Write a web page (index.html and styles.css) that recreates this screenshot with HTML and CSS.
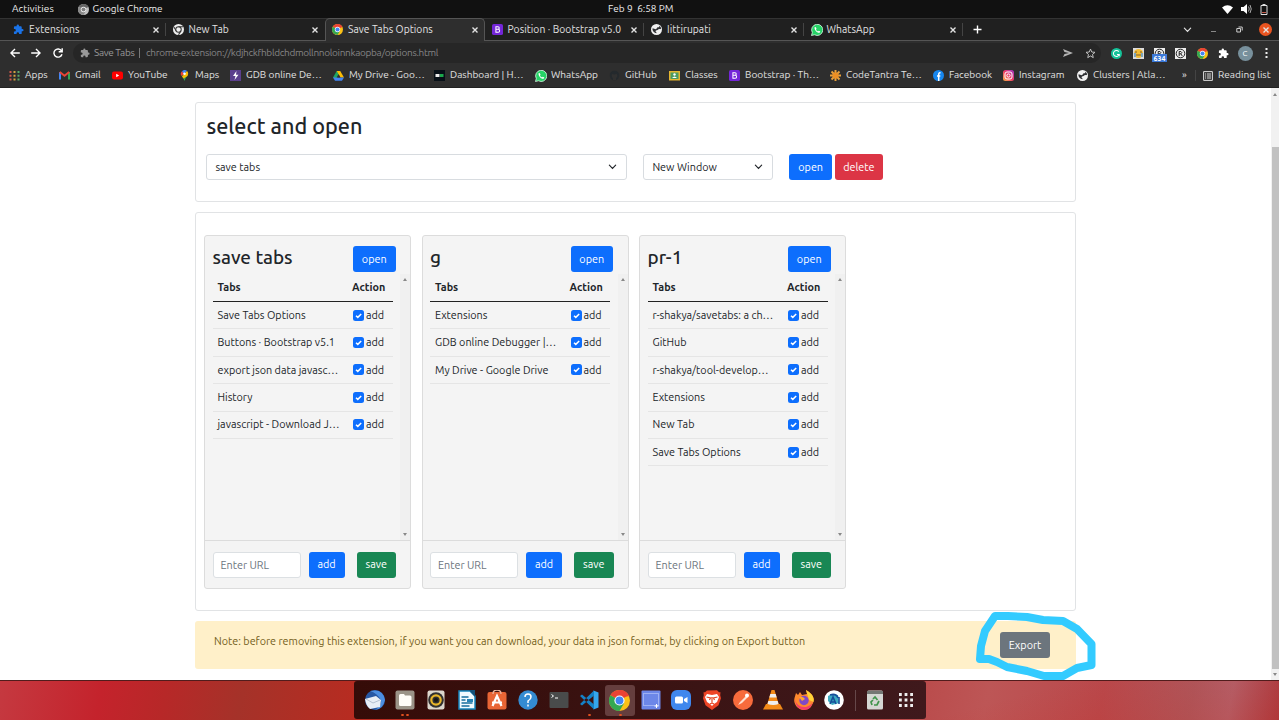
FILE: index.html
```html
<!DOCTYPE html>
<html lang="en">
<head>
<meta charset="utf-8">
<title>Save Tabs Options</title>
<link rel="stylesheet" href="styles.css">
</head>
<body>
<svg class="defs" aria-hidden="true">
  <symbol id="chrome" viewBox="0 0 24 24"><circle cx="12" cy="12" r="12" fill="#fbc116"/><path d="M12 12 1.600 6A12 12 0 0 1 22.400 6z" fill="#ea4335"/><path d="M12 0A12 12 0 0 1 22.400 6H12z" fill="#ea4335"/><path d="M1.600 6A12 12 0 0 0 12 24L17.200 15 12 12z" fill="#34a853"/><path d="M12 6.500h10.600" stroke="#ea4335" stroke-width="1.500"/><circle cx="12" cy="12" r="5.800" fill="#fff"/><circle cx="12" cy="12" r="4.500" fill="#4285f4"/></symbol>
  <symbol id="chrome-mono" viewBox="0 0 24 24"><circle cx="12" cy="12" r="12" fill="#eee"/><circle cx="12" cy="12" r="6" fill="none" stroke="#333" stroke-width="2.200"/><path d="M12 6h10M6.800 15 2 6.500M17.200 15 12 23.500" stroke="#333" stroke-width="2.200"/></symbol>
  <symbol id="puzzle" viewBox="0 0 24 24"><path fill="currentColor" d="M20.500 11H19V7a2 2 0 0 0-2-2h-4V3.500a2.500 2.500 0 0 0-5 0V5H4a2 2 0 0 0-2 2v3.800h1.500a2.700 2.700 0 0 1 0 5.400H2V20a2 2 0 0 0 2 2h3.800v-1.500a2.700 2.700 0 0 1 5.400 0V22H17a2 2 0 0 0 2-2v-4h1.500a2.500 2.500 0 0 0 0-5z"/></symbol>
  <symbol id="globe" viewBox="0 0 24 24"><circle cx="12" cy="12" r="12" fill="#f1f1f1"/><path d="M3 10c3-1 5 2 8 1s1-4 4-4 4-2 2-4c5 2 6 7 4 8s-3-1-5 1-5 1-6 3 3 2 2 5c-5 0-9-5-9-10z" fill="#303134"/></symbol>
  <symbol id="whatsapp" viewBox="0 0 24 24"><path d="m1 23 1.600-6A11.200 11.200 0 1 1 7 21.500z" fill="#25d366" stroke="#e8fff0" stroke-width="1.500"/><path d="M7 8c0-2 2-3 3-1l1 2-1 2c1 2 2 3 4 4l1.500-1.500 3 1.500c0 2-2 3-4 2.500C10 16 7.500 12 7 8z" fill="#fff"/></symbol>
  <symbol id="bootstrap" viewBox="0 0 24 24"><rect width="24" height="24" rx="4" fill="#7426d8"/><path d="M8.500 6v12h5a3.100 3.100 0 0 0 0-6.300H9h4a2.800 2.800 0 0 0 0-5.700z" fill="none" stroke="#fff" stroke-width="2.200"/></symbol>
  <symbol id="close" viewBox="0 0 8 8"><path d="m1.500 1.500 5 5m0-5-5 5" stroke="currentColor" stroke-width="1.400"/></symbol>
  <symbol id="chevron" viewBox="0 0 10 6"><path d="m1.500 1 3.500 3.500L8.500 1" fill="none" stroke="currentColor" stroke-width="1.300" stroke-linecap="round"/></symbol>
  <symbol id="check" viewBox="0 0 11 11"><rect width="11" height="11" rx="2.500" fill="#0d6efd"/><path d="m3 5.700 1.800 1.700L8.200 4" fill="none" stroke="#fff" stroke-width="1.500"/></symbol>
</svg>

<header class="system">
  <span class="activities">Activities</span>
  <svg class="i11 gray"><use href="#chrome"/></svg>
  <span class="app-name">Google Chrome</span>
  <span class="clock">Feb 9&nbsp; 6:58 PM</span>
  <div class="status">
    <svg width="11" height="9" viewBox="0 0 11 9"><path d="M0 2.500Q5.500-2 11 2.500L5.500 9z" fill="#fff"/></svg>
    <svg width="11" height="10" viewBox="0 0 11 10"><path d="M0 3h2.500L6 0v10L2.500 7H0z" fill="#fff"/><path d="M7.500 2.500q1.500 2.500 0 5M9 1q2.500 4 0 8" fill="none" stroke="#aaa"/></svg>
    <svg width="8" height="11" viewBox="0 0 8 11"><path d="M1 1.500h6v9H1zM2.500.5h3" fill="none" stroke="#ddd"/><path d="M2 8.500h4" stroke="#c65a4a"/></svg>
  </div>
</header>

<nav class="tabs">
  <div class="tab"><svg class="i11 blue"><use href="#puzzle"/></svg><span>Extensions</span><svg class="x"><use href="#close"/></svg></div>
  <div class="tab before"><svg class="i11"><use href="#chrome-mono"/></svg><span>New Tab</span><svg class="x"><use href="#close"/></svg></div>
  <div class="tab active"><svg class="i11"><use href="#chrome"/></svg><span>Save Tabs Options</span><svg class="x"><use href="#close"/></svg></div>
  <div class="tab"><svg class="i11"><use href="#bootstrap"/></svg><span>Position · Bootstrap v5.0</span><svg class="x"><use href="#close"/></svg></div>
  <div class="tab"><svg class="i11"><use href="#globe"/></svg><span>Iittirupati</span><svg class="x"><use href="#close"/></svg></div>
  <div class="tab"><svg class="i12"><use href="#whatsapp"/></svg><span>WhatsApp</span><svg class="x"><use href="#close"/></svg></div>
  <svg class="plus" width="9" height="9" viewBox="0 0 9 9"><path d="M4.500.5v8M.5 4.500h8" stroke="#fff" stroke-width="1.400"/></svg>
  <div class="window">
    <svg class="chev"><use href="#chevron"/></svg>
    <svg width="7" height="7" viewBox="0 0 7 7"><path d="M1 5.500h5" stroke="#888"/></svg>
    <svg width="7" height="7" viewBox="0 0 7 7"><path d="M.8 2.500h3.700v3.500H.8zM2.500 1h3.700v3.500" fill="none" stroke="#ccc"/></svg>
    <span class="win-close"><svg class="x"><use href="#close"/></svg></span>
  </div>
</nav>

<div class="toolbar">
  <div class="nav-buttons">
    <svg width="10" height="10" viewBox="0 0 10 10"><path d="M9.800 5H1M5 .9.900 5 5 9.100" fill="none" stroke="#fff" stroke-width="1.400"/></svg>
    <svg width="10" height="10" viewBox="0 0 10 10"><path d="M.2 5H9M5 .9 9.100 5 5 9.100" fill="none" stroke="#fff" stroke-width="1.400"/></svg>
    <svg width="10" height="10" viewBox="0 0 10 10"><path d="M8.500 2.800A4.100 4.100 0 1 0 9 6.200M9.200.3v3.500H5.700" fill="none" stroke="#fff" stroke-width="1.400"/></svg>
  </div>
  <div class="omnibox">
    <svg class="i10"><use href="#puzzle"/></svg>
    <span class="origin">Save Tabs</span><i></i>
    <span class="url">chrome-extension://kdjhckfhbldchdmollnnoloinnkaopba/options.html</span>
    <svg class="send" width="10" height="8" viewBox="0 0 10 8"><path d="m0 0 10 4L0 8l1.500-3L6 4 1.500 3z" fill="#b5b5b5"/></svg>
    <svg width="11" height="11" viewBox="0 0 12 12"><path d="m6 1.200 1.400 3.200 3.500.3-2.700 2.300.8 3.500L6 8.700l-3 1.800.8-3.500-2.700-2.300 3.500-.3z" fill="none" stroke="#ccc"/></svg>
  </div>
  <div class="extensions">
    <svg width="11" height="11" viewBox="0 0 24 24"><circle cx="12" cy="12" r="12" fill="#15c39a"/><path d="M17 8a6.500 6.500 0 1 0 1 6h-5m5 0v4" fill="none" stroke="#fff" stroke-width="2.200"/></svg>
    <svg width="11" height="11" viewBox="0 0 11 11"><path d="M0 0h11v11H0z" fill="#ddd"/><circle cx="5.500" cy="5.500" r="4.600" fill="#f3bd35"/><path d="M2 4h2m3 0h2M3 7h5" stroke="#82612b"/><path d="M1 5h2v4H1zm7 0h2v4H8z" fill="#7ba5bd"/></svg>
    <span class="counter"><svg width="11" height="11" viewBox="0 0 11 11"><path d="M0 0h11v11H0z" fill="#eee"/><circle cx="5.500" cy="5.500" r="4.300" fill="none" stroke="#222"/><path d="M4.200 8V3.500h1.700q2 1.200 0 2.300H4.300m1.500 0L7.300 8" fill="none" stroke="#222"/></svg><b>634</b></span>
    <svg width="11" height="11" viewBox="0 0 11 11"><path d="M0 0h11v11H0z" fill="#eee"/><circle cx="5.500" cy="5.500" r="4.300" fill="none" stroke="#222"/><path d="M4.200 8V3.500h1.700q2 1.200 0 2.300H4.300m1.500 0L7.300 8" fill="none" stroke="#222"/></svg>
    <svg class="i11"><use href="#chrome"/></svg>
    <svg class="i11 white"><use href="#puzzle"/></svg>
    <span class="avatar">C</span>
    <svg width="3" height="10" viewBox="0 0 3 10"><path d="M.5 1h2M.5 5h2M.5 9h2" stroke="#eee" stroke-width="1.800"/></svg>
  </div>
</div>

<nav class="bookmarks">
  <a><svg width="11" height="10" viewBox="0 0 11 10"><g stroke-width="2" stroke-dasharray="2 1.800"><path d="M1.500 0v10" stroke="#d65a4d"/><path d="M5.500 0v10" stroke="#d2a240"/><path d="M9.500 0v10" stroke="#59a867"/></g></svg>Apps</a>
  <a><svg width="11" height="9" viewBox="0 0 11 9"><path d="M1 8.500V1" stroke="#4285f4" stroke-width="2"/><path d="M10 8.500V1" stroke="#34a853" stroke-width="2"/><path d="m.8 1 4.700 3.700L10.200 1" fill="none" stroke="#ea4335" stroke-width="2"/></svg>Gmail</a>
  <a><svg width="11" height="9" viewBox="0 0 11 9"><rect y=".5" width="11" height="8" rx="2" fill="#f00"/><path d="M4.200 2.700v3.600l3-1.800z" fill="#fff"/></svg>YouTube</a>
  <a><svg width="11" height="11" viewBox="0 0 11 11"><path d="M5.500 11Q4.500 7.500 2.500 5.500h6Q6.500 7.500 5.500 11" fill="#34a853"/><path d="M2.500 6A3.700 3.700 0 0 1 3 1.200l2.500 2.500z" fill="#ea4335"/><path d="M3 1.200A3.700 3.700 0 0 1 8 1L5 4z" fill="#4285f4"/><path d="M8 1q2 2 .5 5L4.500 8.500 3 6.500z" fill="#fbbc04"/><circle cx="5.500" cy="3.700" r="1.300" fill="#fff"/></svg>Maps</a>
  <a><svg width="11" height="11" viewBox="0 0 11 11"><path d="M0 0h11v11H0z" fill="#5b3f8d"/><path d="M6.500 1 3 6h2.500L4.500 10 8.500 4.800H6z" fill="#fff"/></svg>GDB online De…</a>
  <a><svg width="11" height="10" viewBox="0 0 11 10"><path d="M3.700 0h3.500L3.500 9.500 0 6.500z" fill="#1fa463"/><path d="M3.700 0h3.500L11 6.500H7.500z" fill="#fbbc04"/><path d="M0 6.500h11l-2 3.300H2z" fill="#4285f4"/><path d="M5.500 3.300 3.600 6.500h3.800z" fill="#2e2e2e"/></svg>My Drive - Goo…</a>
  <a><svg width="11" height="11" viewBox="0 0 11 11"><path d="M0 0h11v11H0z" fill="#071018"/><path d="M1.500 4h4v3h-4z" fill="#eee"/><path d="M6 4h3.500v3H6z" fill="#1ba94c"/></svg>Dashboard | H…</a>
  <a><svg class="i12"><use href="#whatsapp"/></svg>WhatsApp</a>
  <a><svg width="11" height="11" viewBox="0 0 11 11"><circle cx="5.500" cy="5.500" r="4.800" fill="#24292d"/><path d="M4 10V8Q2 7 3 4l2 .5L8 4q1 3-1 4v2" fill="#303030"/></svg>GitHub</a>
  <a><svg width="11" height="11" viewBox="0 0 11 11"><path d="M0 1h11v9.500H0z" fill="#e5b52f"/><path d="M1.500 2.500h8v6.500h-8z" fill="#4b9b61"/><circle cx="5.500" cy="4.500" r="1.200" fill="#fff"/><path d="M3 8q2.500-3 5 0z" fill="#fff"/></svg>Classes</a>
  <a><svg class="i11"><use href="#bootstrap"/></svg>Bootstrap · Th…</a>
  <a><svg width="11" height="11" viewBox="0 0 11 11"><path d="M5.500 0v11M0 5.500h11M1.500 1.500l8 8m0-8-8 8" stroke="#e9a03b" stroke-width="2"/><circle cx="5.500" cy="5.500" r="3" fill="#ed8f24"/></svg>CodeTantra Te…</a>
  <a><svg width="11" height="11" viewBox="0 0 11 11"><circle cx="5.500" cy="5.500" r="5.500" fill="#1686ee"/><path d="M7.500 3Q5.500 2.300 5.700 5v6M4 6h3.300" fill="none" stroke="#fff" stroke-width="1.500"/></svg>Facebook</a>
  <a><svg width="11" height="11" viewBox="0 0 11 11"><defs><linearGradient id="ig" x2="1" y1="1" y2="0"><stop stop-color="#fdb54a"/><stop offset=".5" stop-color="#ed3c68"/><stop offset="1" stop-color="#9b36c7"/></linearGradient></defs><rect width="11" height="11" rx="2.500" fill="url(#ig)"/><g fill="none" stroke="#fff"><rect x="2" y="2" width="7" height="7" rx="2"/><circle cx="5.500" cy="5.500" r="1.600"/></g></svg>Instagram</a>
  <a><svg class="i11"><use href="#globe"/></svg>Clusters | Atla…</a>
  <a class="more">»</a>
  <a class="reading"><svg width="10" height="10" viewBox="0 0 10 10"><path d="M.6.6h8.800v8.800H.6zM2 3h1.200m.8 0h4M2 5h1.200m.8 0h4M2 7h1.200m.8 0h4" fill="none" stroke="#ddd"/></svg>Reading list</a>
</nav>

<main class="page">
  <div class="container">
    <section class="panel chooser">
      <h1>select and open</h1>
      <div class="controls">
        <div class="select wide">save tabs<svg class="chev"><use href="#chevron"/></svg></div>
        <div class="select">New Window<svg class="chev"><use href="#chevron"/></svg></div>
        <div class="pair"><button class="btn primary open">open</button><button class="btn danger">delete</button></div>
      </div>
    </section>

    <section class="panel groups">
      <article class="card">
        <header><h2>save tabs</h2><button class="btn primary open">open</button></header>
        <div class="scroll"><div class="table">
          <div class="row head"><span>Tabs</span><span>Action</span></div>
          <div class="row"><span>Save Tabs Options</span><label><svg class="i11"><use href="#check"/></svg>add</label></div>
          <div class="row"><span>Buttons · Bootstrap v5.1</span><label><svg class="i11"><use href="#check"/></svg>add</label></div>
          <div class="row"><span>export json data javasc…</span><label><svg class="i11"><use href="#check"/></svg>add</label></div>
          <div class="row"><span>History</span><label><svg class="i11"><use href="#check"/></svg>add</label></div>
          <div class="row"><span>javascript - Download J…</span><label><svg class="i11"><use href="#check"/></svg>add</label></div>
        </div><div class="bar"><i class="up"></i><i class="down"></i></div></div>
        <footer><div class="input">Enter URL</div><button class="btn primary add">add</button><button class="btn success">save</button></footer>
      </article>
      <article class="card">
        <header><h2>g</h2><button class="btn primary open">open</button></header>
        <div class="scroll"><div class="table">
          <div class="row head"><span>Tabs</span><span>Action</span></div>
          <div class="row"><span>Extensions</span><label><svg class="i11"><use href="#check"/></svg>add</label></div>
          <div class="row"><span>GDB online Debugger |…</span><label><svg class="i11"><use href="#check"/></svg>add</label></div>
          <div class="row"><span>My Drive - Google Drive</span><label><svg class="i11"><use href="#check"/></svg>add</label></div>
        </div><div class="bar"><i class="up"></i><i class="down"></i></div></div>
        <footer><div class="input">Enter URL</div><button class="btn primary add">add</button><button class="btn success">save</button></footer>
      </article>
      <article class="card">
        <header><h2>pr-1</h2><button class="btn primary open">open</button></header>
        <div class="scroll"><div class="table">
          <div class="row head"><span>Tabs</span><span>Action</span></div>
          <div class="row"><span>r-shakya/savetabs: a ch…</span><label><svg class="i11"><use href="#check"/></svg>add</label></div>
          <div class="row"><span>GitHub</span><label><svg class="i11"><use href="#check"/></svg>add</label></div>
          <div class="row"><span>r-shakya/tool-develop…</span><label><svg class="i11"><use href="#check"/></svg>add</label></div>
          <div class="row"><span>Extensions</span><label><svg class="i11"><use href="#check"/></svg>add</label></div>
          <div class="row"><span>New Tab</span><label><svg class="i11"><use href="#check"/></svg>add</label></div>
          <div class="row"><span>Save Tabs Options</span><label><svg class="i11"><use href="#check"/></svg>add</label></div>
        </div><div class="bar"><i class="up"></i><i class="down"></i></div></div>
        <footer><div class="input">Enter URL</div><button class="btn primary add">add</button><button class="btn success">save</button></footer>
      </article>
    </section>

    <section class="note">
      <p>Note: before removing this extension, if you want you can download, your data in json format, by clicking on Export button</p>
      <button class="btn secondary">Export</button>
      <svg class="marker" width="126" height="74" viewBox="0 0 126 74"><path d="M23 8 13 23 9 38 8 51H17L25 54 35 59 55 63 72 68H91L105 60 119.500 57V36L105 21 91 13 71 12 55 9 36 8z" fill="none" stroke="#33cbff" stroke-width="8" stroke-linejoin="round"/></svg>
    </section>
  </div>
  <div class="page-bar"><i class="up"></i><div class="thumb"></div><i class="down"></i></div>
</main>

<footer class="desktop">
  <div class="dock">
    <span><svg viewBox="0 0 20 20"><circle cx="10" cy="10" r="10" fill="#2858a3"/><path d="M5 1q13-3 15 9-2 9-10 10 7-4 6-10-4-7-11-9z" fill="#4c8ee0"/><path d="m0 9 11-3 5 4-1 7-10 2Q1 16 0 9z" fill="#e9eef5"/><path d="m1 9 7 4 7-3" fill="none" stroke="#b6c1d0"/></svg></span>
    <span class="run two"><svg viewBox="0 0 20 20"><rect x=".5" y=".5" width="19" height="19" rx="2" fill="#9b9488"/><path d="M4 5.500q0-1.500 1.500-1.500H9l1 1.500h5q1.500 0 1.500 1.500v7.500q0 1.500-1.500 1.500H5.500Q4 16 4 14.500z" fill="#fffdf8"/></svg></span>
    <span><svg viewBox="0 0 20 20"><rect x="1.500" y=".5" width="17" height="19" rx="2" fill="#ddd8ce"/><circle cx="10" cy="10" r="7.800" fill="#303030"/><circle cx="10" cy="10" r="4.700" fill="none" stroke="#e8b62b" stroke-width="2.200"/><circle cx="10" cy="10" r="2" fill="#151515"/></svg></span>
    <span><svg viewBox="0 0 20 20"><path d="M2 1h11l5 5v13H2z" fill="#f2faff" stroke="#1685bd" stroke-width="1.500"/><path d="M12 0h6v7z" fill="#15517a"/><path d="M4.500 7h7m-7 3h4m-4 3h11m-11 3h8" stroke="#176e9d" stroke-width="1.500"/><path d="M10 9h6v3h-6z" fill="#2682b5"/></svg></span>
    <span><svg viewBox="0 0 20 20"><rect x=".5" y="2" width="19" height="17.500" rx="2" fill="#e86535"/><path d="M6 4q0-4 4-4t4 4" fill="none" stroke="#e9b49d" stroke-width="1.400"/><path d="m5.500 16 4.500-10 4.500 10M5 12.500h10" fill="none" stroke="#fff" stroke-width="2.200"/></svg></span>
    <span><svg viewBox="0 0 20 20"><circle cx="10" cy="10" r="9.700" fill="#348bd2"/><path d="M7 7q0-3 3-3t3 3q0 2-3 4v2m0 1.500V16.500" fill="none" stroke="#fff" stroke-width="1.500"/></svg></span>
    <span><svg viewBox="0 0 20 20"><rect x=".5" y="2" width="19" height="16" rx="1" fill="#494b4b"/><path d="m2.500 4.500 2 1.500-2 1.500M6 8h3" fill="none" stroke="#fff"/></svg></span>
    <span class="run"><svg viewBox="0 0 20 20"><path d="m14.500.5 5 2v15l-5 2z" fill="#35a6ed"/><path d="m1 6 2-1.500 12 10v5zm0 8 2 1.500 12-10v-5z" fill="#1482c8"/></svg></span>
    <span class="run current"><svg class="big"><use href="#chrome"/></svg></span>
    <span><svg viewBox="0 0 20 20"><rect x=".5" y=".5" width="19" height="19" rx="1" fill="#6c87e8"/><path d="M2.500 3.500h15v12h-15z" fill="none" stroke="#d1dbff" stroke-dasharray="1 1"/><path d="M13.500 16h4m-2-2v4" stroke="#fff"/></svg></span>
    <span><svg viewBox="0 0 20 20"><rect width="20" height="20" rx="6" fill="#4087ed"/><rect x="4" y="6.500" width="8" height="7" rx="1.500" fill="#fff"/><path d="m13 9 3.500-2v6L13 11z" fill="#fff"/></svg></span>
    <span><svg viewBox="0 0 20 20"><path d="m5 .5 10-.2 2 2h1.500l-.3 3 .8 3-2.500 7L10 20l-6.500-4.700L1 8.300l.8-3-.3-3H3z" fill="#ee4526"/><path d="m5 4 5 1 5-1 2 3-2 5-3 2-2 2-2-2-3-2-2-5z" fill="#fff"/><path d="m4.500 7 4 1-1 2m8-3-4 1 1 2M10 7v6m-2 1 2-1 2 1" fill="none" stroke="#e44825" stroke-width="1.200"/></svg></span>
    <span><svg viewBox="0 0 20 20"><circle cx="10" cy="10" r="10" fill="#f76b3c"/><path d="m5 15 2-3 6-6 2 1-6 6z" fill="#ffe0d0"/><circle cx="14" cy="5.500" r="2" fill="#fff"/></svg></span>
    <span><svg viewBox="0 0 20 20"><path d="M3 14h14l3 5.500H0z" fill="#f28a18"/><path d="M8.500 0h3L16 15q-6 3-12 0z" fill="#f28a18"/><path d="M7.300 4h5.400l1 3.500H6.300zM5.300 11h9.400l.8 3q-5 2-11 0z" fill="#eee"/></svg></span>
    <span><svg viewBox="0 0 20 20"><path d="M10 20A9.700 9.700 0 0 1 .5 8L2 3l2 2 2-3 2 3 5-1-1-4q6 3 8 9-1 10-10 11z" fill="#ff892e"/><path d="M12 0q9 5 7.500 12L15 10z" fill="#ffd338"/><path d="M1 9q2 9 11 8 7-2 7-7-1 10-9 10T1 9z" fill="#f43f69"/><circle cx="10" cy="10.500" r="4.700" fill="#8049c7"/><path d="M5 7q4-1 6 2l-3 2z" fill="#ffa52f"/></svg></span>
    <span><svg viewBox="0 0 20 20"><circle cx="10" cy="10" r="9.800" fill="#fff"/><path d="m4 6 4-2 6 1 1 8-7 2-4-4z" fill="#3eabc1"/><path d="M6 5q6-2 8 3M6 14l3-7 3 7m-5-2h4M15 7v7" fill="none" stroke="#174d99" stroke-width="1.600"/></svg></span>
    <i class="split"></i>
    <span><svg viewBox="0 0 20 20"><rect x="2" y=".5" width="16" height="19" rx="1.500" fill="#d5d7d3"/><path d="M2 1h16v3H2z" fill="#747774"/><path d="m8 9 2-2 2.500 3m1.500 1-2 4H9m-2 0-1-3 2-2" fill="none" stroke="#40944b" stroke-width="1.700"/></svg></span>
    <span><svg viewBox="0 0 20 20"><path d="M3 4.500h14M3 10h14M3 15.500h14" stroke="#eee" stroke-width="2.800" stroke-dasharray="2.800 2.800"/></svg></span>
  </div>
</footer>
</body>
</html>
```
FILE: styles.css
```css
* { box-sizing: border-box; }
body { margin: 0; width: 1279px; height: 720px; overflow: hidden; display: flex; flex-direction: column; font-family: Ubuntu, "Noto Sans", sans-serif; font-size: 10.800px; line-height: 1; color: #212529; background: #fff; }
svg { flex: none; display: block; }
.defs { display: none; }
.i10 { width: 10px; height: 10px; }
.i11 { width: 11px; height: 11px; }
.i12 { width: 12px; height: 12px; }
.x { width: 8px; height: 8px; }
.chev { width: 9px; height: 6px; }
.gray { filter: grayscale(1); }
.blue { color: #1a73e8; }
.white { color: #fff; }

.system { height: 18px; flex: none; position: relative; display: flex; align-items: center; padding-left: 12px; background: #111; color: #eee; font-size: 10px; }
.activities { width: 66px; letter-spacing: .08px; }
.app-name { margin-left: 3.500px; }
.clock { position: absolute; left: 608px; letter-spacing: 0; }
.status { margin-left: auto; display: flex; align-items: center; gap: 8px; padding-right: 11px; }

.tabs { height: 23px; flex: none; display: flex; align-items: flex-start; padding-left: 6px; background: #202020; border-top: 1px solid #333; border-bottom: 1px solid #555; color: #e3e3e3; font-size: 10.300px; }
.tab { width: 159.500px; height: 21px; flex: none; display: flex; align-items: center; padding: 0 6px 0 7px; position: relative; }
.tab:not(.before):not(.active)::after { content: ""; position: absolute; right: 0; top: 4px; height: 13px; width: 1px; background: #444; }
.tab .x { margin-left: auto; }
.tab svg + span { margin-left: 5px; white-space: nowrap; letter-spacing: .04px; }
.tab .i12 + span { margin-left: 4px; }
.active { background: #2e2e2e; border: 1px solid #555; border-bottom: 0; border-radius: 5px 5px 0 0; height: 23px; margin-top: -1px; padding: 0 5px 1px 6px; }
.plus { margin: 6px 0 0 10px; }
.window { height: 21px; margin-left: auto; display: flex; align-items: center; gap: 18.500px; padding-right: 7px; }
.win-close { width: 13px; height: 13px; border-radius: 50%; background: #e95420; display: grid; place-items: center; margin-left: -2px; }

.toolbar { height: 24px; flex: none; display: flex; align-items: center; background: #2e2e2e; color: #999; }
.nav-buttons { width: 73px; padding-left: 9.500px; display: flex; gap: 11.500px; }
.omnibox { width: 1028px; height: 20px; border-radius: 10px; background: #262626; display: flex; align-items: center; padding: 0 5px 0 7px; font-size: 10px; }
.origin { margin-left: 4px; width: 45px; letter-spacing: -.35px; }
.omnibox i { width: 1px; height: 10px; background: #777; margin-right: 6px; }
.url { color: #858585; letter-spacing: -.32px; }
.send { margin-left: auto; margin-right: 12px; }
.extensions { display: grid; grid-template-columns: repeat(8, 21.400px); justify-items: center; align-items: center; margin-left: 5px; }
.counter { position: relative; }
.counter b { position: absolute; left: -2px; top: 6px; width: 15px; background: #3c79d8; color: #fff; font-size: 7px; line-height: 8px; text-align: center; }
.avatar { width: 15px; height: 15px; border-radius: 50%; background: #78909c; color: #fff; font-size: 8px; line-height: 15px; text-align: center; }

.bookmarks { height: 23px; flex: none; display: grid; grid-template-columns: 50px 53px 67px 51px 103px 101px 101px 74px 60px 60px 101px 103px 70px 74px 105px 13px 1fr; align-items: center; padding: 0 0 1px 9px; background: #2e2e2e; border-bottom: 1px solid #222; color: #e2e2e2; font-size: 10.100px; }
.bookmarks a { display: flex; align-items: center; white-space: nowrap; }
.bookmarks a svg { margin-right: 5px; }
.bookmarks .i12 { margin-right: 4px; }
.bookmarks .reading { border-left: 1px solid #444; padding-left: 7px; }

.page { height: 592px; flex: none; display: flex; justify-content: space-between; background: #fff; }
.container { margin-left: 195px; width: 881px; padding-top: 14px; }
.panel { border: 1px solid #e1e3e5; border-radius: 3px; }
.chooser { height: 100px; padding: 10px 11px 11px 10.400px; }
h1, h2 { margin: 0; font-weight: 500; }
h1 { font-size: 21.600px; line-height: 26px; }
.controls { display: flex; margin-top: 15px; gap: 16px; }
.select { width: 130px; height: 26px; display: flex; align-items: center; justify-content: space-between; padding: 0 9px 0 8px; border: 1px solid #d8dce0; border-radius: 3px; }
.select.wide { width: 421px; }
.pair { display: flex; gap: 3px; }
.btn { height: 26px; border: 0; border-radius: 3px; padding: 0; font: inherit; color: #fff; text-align: center; flex: none; }
.primary { background: #0d6efd; }
.danger { background: #dc3545; width: 48px; }
.success { background: #198754; width: 39.500px; margin-left: 12px; }
.secondary { background: #6c757d; width: 50px; }
.open { width: 42.500px; }
.add { width: 36px; margin-left: 8px; }

.groups { margin-top: 10px; height: 399px; padding: 22px 8px; display: flex; gap: 10.500px; }
.card { width: 207px; height: 354px; background: #f4f4f4; border: 1px solid #dcdcdc; border-radius: 3px; display: flex; flex-direction: column; }
.card header { height: 38px; display: flex; justify-content: space-between; padding: 10px 14.500px 0 7.500px; }
h2 { font-size: 18.900px; line-height: 24px; margin-top: -1px; }
.scroll { height: 267px; display: flex; justify-content: space-between; border-bottom: 1px solid #dcdcdc; }
.table { width: 180px; margin-left: 7.500px; }
.row { height: 27.400px; display: grid; grid-template-columns: 135.500px 40px; align-items: center; padding-left: 5px; border-bottom: 1px solid #e5e5e5; white-space: nowrap; }
.row label { display: flex; align-items: center; gap: 2px; }
.head { height: 28px; border-bottom: 1px solid #222; font-weight: 700; }
.head span + span { margin-left: -1px; }
.bar { width: 10px; background: #f0f0f0; display: flex; flex-direction: column; justify-content: space-between; padding: 4px 3px; }
.up, .down { width: 0; height: 0; border: 2.500px solid transparent; }
.up { border-bottom: 3px solid #888; border-top: 0; }
.down { border-top: 3px solid #888; border-bottom: 0; }
.card footer { display: flex; padding: 11px 0 0 7.500px; }
.card footer > * { height: 25.500px; }
.input { width: 88px; background: #fff; border: 1px solid #dce0e3; border-radius: 3px; color: #6c757d; padding: 6.500px 7px; }

.note { margin-top: 10px; height: 48px; background: #fff0c9; border-radius: 3px; display: flex; justify-content: space-between; padding: 11px 26px 0 19px; position: relative; color: #74601b; }
.note p { margin: 4px 0 0; white-space: nowrap; }
.marker { position: absolute; left: 777px; top: -13px; }
.page-bar { width: 8px; background: #f1f1f1; display: flex; flex-direction: column; align-items: center; padding: 5px 0 4px; }
.thumb { width: 7px; height: 523px; background: #c1c1c1; margin-top: 51px; }
.page-bar .down { margin-top: 4px; }

.desktop { flex: 1; border-top: 1px solid #511c1c; display: flex; justify-content: center; background: linear-gradient(165deg, transparent 75%, #d0210c33), linear-gradient(100deg, #c53940 0, #c4232c 8%, #b72828 13%, #a53229 19%, #b92b20 29%, #ba4c4c 72%, #bd5656 77%, #b9484b 86%, #ad585e 93%, #b2626d 96%, #a93c43 100%); }
.dock { width: 572px; margin-left: 1px; height: 38px; background: linear-gradient(90deg, #350c08, #3f191c); border-radius: 3px; display: flex; align-items: center; padding-left: 5.500px; }
.dock span { width: 30.650px; height: 31px; flex: none; display: grid; place-items: center; position: relative; border-radius: 3px; }
.dock svg { width: 20px; height: 20px; }
.dock .big { width: 21px; height: 21px; }
.current { background: #653e3e; }
.run::after { content: ""; position: absolute; bottom: 0; left: 14px; width: 3px; height: 2px; border-radius: 50%; background: #e95420; }
.two::after { left: 11px; box-shadow: 5px 0 #e95420; }
.split { width: 1px; height: 21px; background: #66484a; margin: 0 4px 0 5px; }
```
